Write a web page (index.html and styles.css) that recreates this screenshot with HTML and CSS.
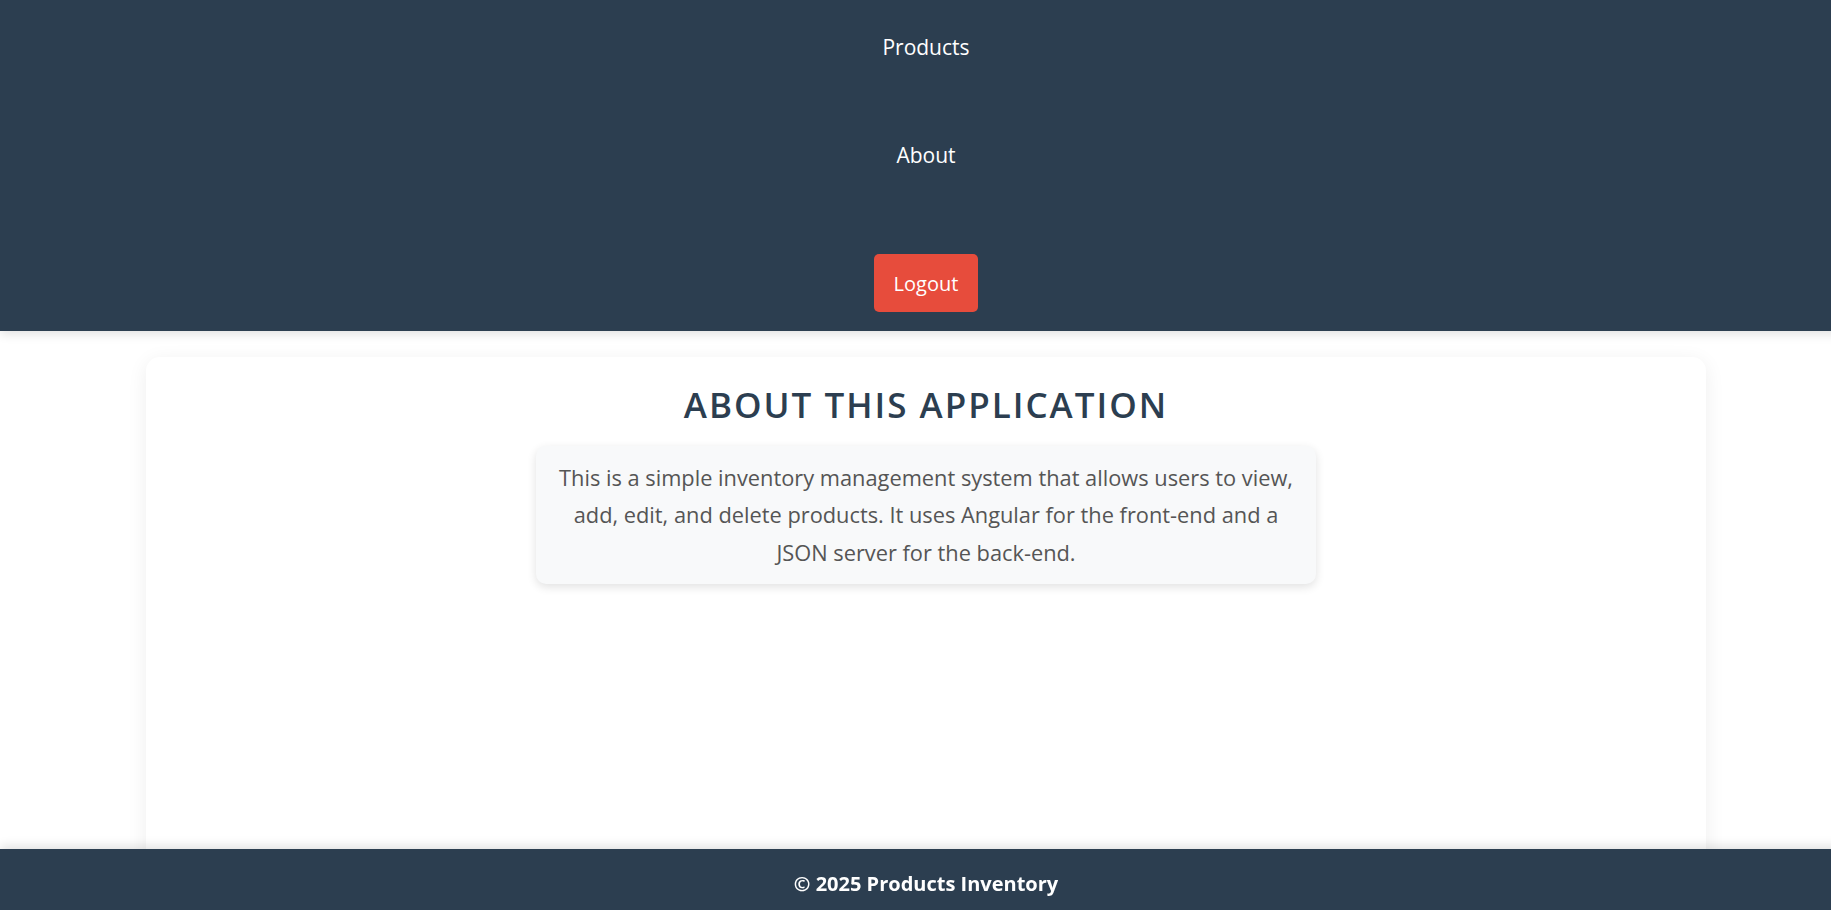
FILE: index.html
```html
<!DOCTYPE html>
<html lang="en">
<head>
<meta charset="utf-8">
<title>Products Inventory</title>
<link rel="stylesheet" href="styles.css">
</head>
<body>
<div class="app">
  <header class="topbar">
    <nav class="nav">
      <a class="nav-link" href="#">Products</a>
      <a class="nav-link" href="#">About</a>
      <button class="logout" type="button">Logout</button>
    </nav>
  </header>
  <main class="content">
    <section class="card">
      <h1 class="title">About This Application</h1>
      <p class="desc">This is a simple inventory management system that allows users to view, add, edit, and delete products. It uses Angular for the front-end and a JSON server for the back-end.</p>
    </section>
  </main>
  <footer class="footer">© 2025 Products Inventory</footer>
</div>
</body>
</html>
```

FILE: styles.css
```css
html, body {
  margin: 0;
  padding: 0;
  overflow: hidden;
  background: #ffffff;
}
body {
  font-family: "Open Sans", "Noto Sans", sans-serif;
}
.app {
  width: 1852px;
  position: relative;
  min-height: 910px;
}
.topbar {
  background: #2c3e50;
  height: 331px;
  box-sizing: border-box;
  box-shadow: 0 3px 10px rgba(0,0,0,0.12);
  position: relative;
  z-index: 2;
}
.nav {
  display: flex;
  flex-direction: column;
  align-items: center;
  padding-top: 16px;
}
.nav-link {
  color: #ffffff;
  text-decoration: none;
  font-size: 21px;
  line-height: 28px;
  padding: 17px 0;
}
.nav-link + .nav-link {
  margin-top: 46px;
}
.logout {
  margin-top: 68px;
  width: 104px;
  height: 58px;
  border: none;
  border-radius: 5px;
  background: #e74c3c;
  color: #ffffff;
  font-family: inherit;
  font-size: 20px;
  cursor: pointer;
}
.content {
  padding-top: 26px;
}
.card {
  width: 1560px;
  min-height: 620px;
  margin: 0 auto;
  background: #ffffff;
  border-radius: 14px;
  box-shadow: 0 4px 20px rgba(0,0,0,0.07);
  box-sizing: border-box;
  padding: 27px 0;
  display: flex;
  flex-direction: column;
  align-items: center;
}
.title {
  margin: 0;
  color: #2c3e50;
  font-size: 35px;
  font-weight: 600;
  text-transform: uppercase;
  letter-spacing: 2px;
  line-height: 1.2;
}
.desc {
  margin: 20px 0 0;
  box-sizing: border-box;
  width: 780px;
  padding: 12.8px 16px;
  background: #f8f9fa;
  border-radius: 10px;
  box-shadow: 0 3px 10px rgba(0,0,0,0.12);
  color: #555555;
  font-size: 21.8px;
  line-height: 37.44px;
  text-align: center;
}
.footer {
  position: fixed;
  left: 0;
  bottom: 0;
  width: 1852px;
  height: 61px;
  box-sizing: border-box;
  background: #2c3e50;
  color: #ffffff;
  font-weight: 700;
  font-size: 20px;
  text-align: center;
  padding-top: 21px;
  box-shadow: 0 -3px 10px rgba(0,0,0,0.12);
  z-index: 3;
}
```
